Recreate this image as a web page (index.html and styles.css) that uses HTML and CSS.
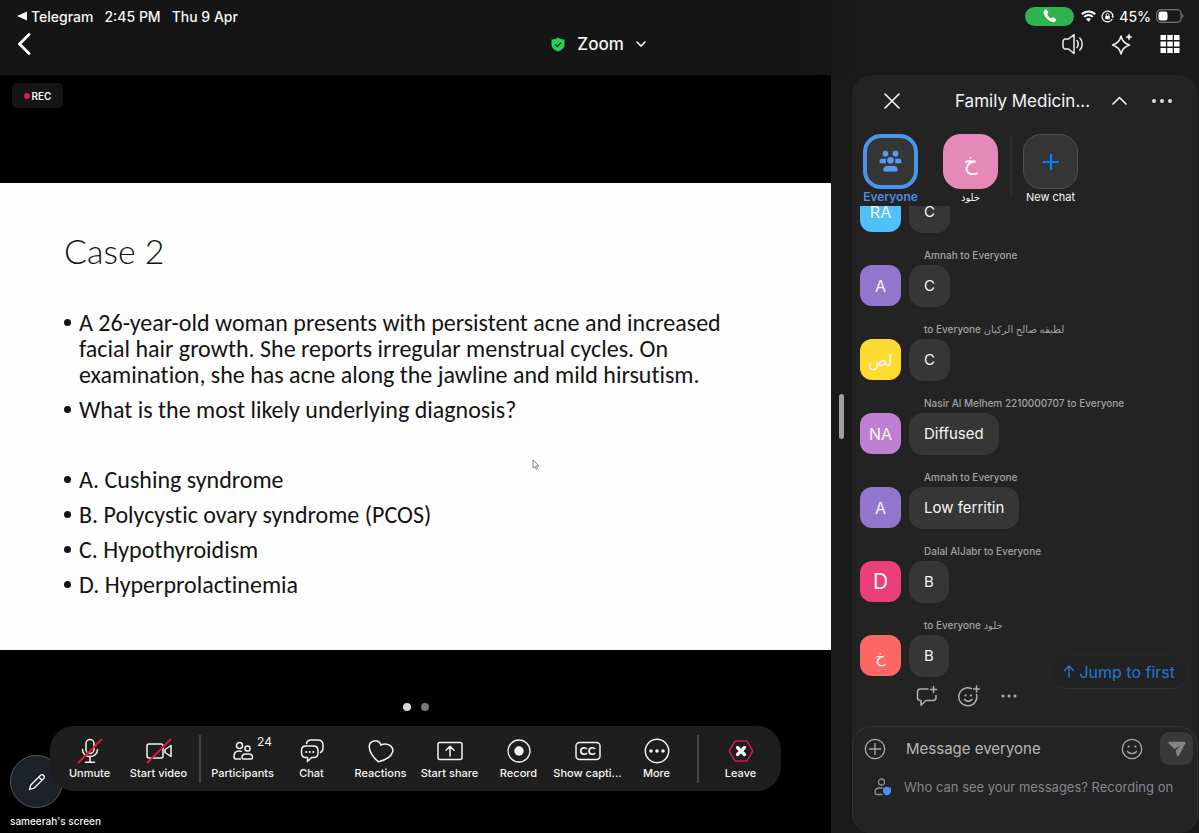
FILE: index.html
```html
<!DOCTYPE html>
<html lang="en">
<head>
    <meta charset="UTF-8">
    <meta name="viewport" content="width=device-width, initial-scale=1.0">
    <title>Zoom</title>
    <link rel="stylesheet" href="styles.css">
</head>
<body>
    <header class="topbar">
        <div class="status">
            <a href="#" class="status-back">
                <svg width="10" height="10" viewBox="0 0 10 10"><path d="M10 .5v9L0 5z" fill="currentColor"/></svg>
                Telegram
            </a>
            <span>2:45 PM</span>
            <span>Thu 9 Apr</span>
            <div class="status-right">
                <span class="call-pill">
                    <svg width="14" height="14" viewBox="0 0 14 14"><path d="M1.2 1.6C2.4.2 3.3.2 4.200 1.500l.9 1.400c.4.7.3 1.200-.3 1.700-.6.5-.6.9-.1 1.700.7 1.100 1.500 1.900 2.600 2.700.7.5 1.100.5 1.700-.2.5-.6 1-.7 1.700-.2l1.700 1.200c1 .8 1 1.500-.1 2.600-1.100 1.100-3 1-5.300-.4C4.300 10.400 2.600 8.600 1.300 6 .3 4 .3 2.700 1.200 1.600z" fill="#fff"/></svg>
                </span>
                <svg width="15" height="12" viewBox="0 0 15 12" fill="none" stroke="#fff" stroke-width="2"><path d="M.8 4.300c3.800-3.900 9.600-3.900 13.400 0M3.200 6.900c2.500-2.400 6.100-2.400 8.600 0"/><path d="M5 9c1.500-1.400 3.500-1.400 5 0l-2.500 2.700z" fill="#fff" stroke="none"/></svg>
                <svg width="13" height="13" viewBox="0 0 13 13" fill="none" stroke="#fff" stroke-width="1.200"><path d="M11.300 9A5.400 5.400 0 1 1 11.900 6.500"/><path d="M10.300 6.200h2.700l-1.200 2z" fill="#fff" stroke="none"/><rect x="4.200" y="5.900" width="4.600" height="3.400" rx=".6" fill="#fff" stroke="none"/><path d="M5.200 6V4.800a1.300 1.300 0 0 1 2.600 0V6" stroke-width="1"/></svg>
                <span>45%</span>
                <svg width="28" height="14" viewBox="0 0 28 14"><rect x=".7" y=".7" width="24.500" height="12.600" rx="4" fill="none" stroke="#777" stroke-width="1.200"/><rect x="2.500" y="2.500" width="9" height="9" rx="2.200" fill="#fff"/><path d="M26.400 5v4c1.500-.6 1.500-3.400 0-4z" fill="#777"/></svg>
            </div>
        </div>
        <div class="nav">
            <button class="icon-btn" aria-label="Back">
                <svg width="14" height="22" viewBox="0 0 14 22" fill="none" stroke="#fff" stroke-width="2.800" stroke-linecap="round" stroke-linejoin="round"><path d="M12 1.500 2.500 11l9.500 9.500"/></svg>
            </button>
            <button class="meeting-title">
                <svg width="14" height="15" viewBox="0 0 14 15"><path d="M7 .5c1.800 1.300 3.800 1.900 6.500 2v5c0 3.300-2.500 5.700-6.500 7-4-1.300-6.500-3.700-6.500-7v-5C3.200 2.400 5.200 1.800 7 .5z" fill="#23d05c"/><path d="m4 7.300 2.200 2.200 3.900-4" fill="none" stroke="#12331c" stroke-width="1.500"/></svg>
                <span>Zoom</span>
                <svg width="10" height="6" viewBox="0 0 10 6" fill="none" stroke="#fff" stroke-width="1.500" stroke-linecap="round"><path d="m1 1 4 4 4-4"/></svg>
            </button>
            <div class="nav-right">
                <button class="icon-btn" aria-label="Speaker">
                    <svg width="22" height="22" viewBox="0 0 22 22" fill="none" stroke="#eee" stroke-width="1.500" stroke-linecap="round" stroke-linejoin="round"><path d="M3.500 6h3L12 1.500v19L6.500 16h-3A2.500 2.500 0 0 1 1 13.500v-5A2.500 2.500 0 0 1 3.500 6z"/><path d="M15 7.500c1.600 1.800 1.600 5.200 0 7M17.800 5c3.200 3 3.200 9 0 12"/></svg>
                </button>
                <button class="icon-btn" aria-label="AI Companion">
                    <svg width="22" height="22" viewBox="0 0 22 22" fill="none" stroke="#eee" stroke-width="1.500" stroke-linejoin="round"><path d="M10 3c1.300 5 3.200 7 8.500 9-5.300 2-7.200 4-8.500 9-1.300-5-3.200-7-8.500-9C6.800 10 8.700 8 10 3z"/><path d="M18 .8c.5 2 1.200 2.700 3.200 3.200-2 .5-2.700 1.200-3.200 3.200-.5-2-1.200-2.700-3.200-3.200 2-.5 2.700-1.200 3.200-3.200z" fill="#eee" stroke-width=".5"/></svg>
                </button>
                <button class="icon-btn" aria-label="Gallery view">
                    <svg width="20" height="20" viewBox="0 0 20 20" fill="#fff"><path d="M.5 1h5.500v5H.5zM7.250 1h5.500v5h-5.500zM14 1h5.500v5H14zM.5 7.500h5.500v5H.5zM7.250 7.500h5.500v5h-5.500zM14 7.500h5.500v5H14zM.5 14h5.500v5H.5zM7.250 14h5.500v5h-5.500zM14 14h5.500v5H14z"/></svg>
                </button>
            </div>
        </div>
    </header>

    <div class="content">
        <main class="stage">
            <div class="stage-top">
                <span class="rec"><i></i>REC</span>
            </div>

            <section class="slide">
                <h1>Case 2</h1>
                <ul>
                    <li>A 26-year-old woman presents with persistent acne and increased<br>facial hair growth. She reports irregular menstrual cycles. On<br>examination, she has acne along the jawline and mild hirsutism.</li>
                    <li>What is the most likely underlying diagnosis?</li>
                    <li class="blank"></li>
                    <li>A. Cushing syndrome</li>
                    <li>B. Polycystic ovary syndrome (PCOS)</li>
                    <li>C. Hypothyroidism</li>
                    <li>D. Hyperprolactinemia</li>
                </ul>
                <svg class="cursor" width="8" height="11" viewBox="0 0 8 11"><path d="M1 1v8l2-1.700 1.300 2.900 1.300-.6L4.400 6.800H7z" fill="#fff" stroke="#777" stroke-width=".9"/></svg>
            </section>

            <div class="pages"><i class="current"></i><i></i></div>

            <div class="stage-bottom">
                <button class="annotate" aria-label="Annotate">
                    <svg width="18" height="18" viewBox="0 0 18 18" fill="none" stroke="#fff" stroke-width="1.300" stroke-linejoin="round"><path d="M1.500 16.500 2.800 12 12.600 2.200a1.900 1.900 0 0 1 2.700 0l.5.5a1.900 1.900 0 0 1 0 2.700L6 15.200zM10.800 4l3.200 3.200"/></svg>
                </button>
                <nav class="toolbar">
                    <button class="tool">
                        <svg width="26" height="26" viewBox="0 0 26 26" fill="none" stroke="#f2f2f2" stroke-width="1.500" stroke-linecap="round"><rect x="9" y="1.500" width="8" height="14" rx="4"/><path d="M5.500 11.500c0 9.300 15 9.300 15 0M13 19v5M8.500 24.200h9"/><path d="M1.500 24.500 24.500 1.500" stroke="#e3173e" stroke-width="1.800"/></svg>
                        Unmute
                    </button>
                    <button class="tool">
                        <svg width="26" height="26" viewBox="0 0 26 26" fill="none" stroke="#f2f2f2" stroke-width="1.500" stroke-linejoin="round"><rect x="1" y="6" width="16" height="14" rx="2"/><path d="M19 11.500 25 7.500v11L19 14.500z"/><path d="M1.500 24.500 24.500 1.500" stroke="#e3173e" stroke-width="1.800" stroke-linecap="round"/></svg>
                        Start video
                    </button>
                    <span class="tool-divider"></span>
                    <button class="tool">
                        <svg width="26" height="26" viewBox="0 0 26 26" fill="none" stroke="#f2f2f2" stroke-width="1.500"><circle cx="9.500" cy="7.500" r="3"/><circle cx="17.500" cy="10.500" r="2.600"/><path d="M11 21H6c-1.500 0-2-.8-2-2.500 0-3.500 1.500-5.500 5-5.500 1.200 0 2 .2 2.800.7"/><path d="M13.500 21h7.500c1.200 0 1.500-.8 1.500-1.600 0-2-1.500-3.400-3.500-3.400h-3.500c-2 0-3.500 1.400-3.500 3.400 0 .8.400 1.600 1.500 1.600z"/></svg>
                        <span class="count">24</span>
                        Participants
                    </button>
                    <button class="tool">
                        <svg width="26" height="26" viewBox="0 0 26 26" fill="none" stroke="#f2f2f2" stroke-width="1.500" stroke-linejoin="round" stroke-linecap="round"><path d="M7.500 5.500c.5-2.500 2-3.500 4.500-3.500h6.500c3.500 0 5.500 2 5.500 5v3c0 2.200-.8 3.600-2.500 4.500"/><path d="M7 8h7.500c3 0 4.500 1.700 4.500 4.500v2.500c0 3-1.500 4.500-4.500 4.500h-2L8.500 23.500v-4H7c-3 0-4.500-1.500-4.500-4.500v-2.500C2.500 9.700 4 8 7 8z"/><path d="M7.200 14h.1M10.700 14h.1M14.200 14h.1" stroke-width="2"/></svg>
                        Chat
                    </button>
                    <button class="tool">
                        <svg width="26" height="26" viewBox="0 0 26 26" fill="none" stroke="#f2f2f2" stroke-width="1.500" stroke-linejoin="round"><path d="M10.500 23.800C5.500 20 1 13.500 1.200 8.500 1.500 2.500 10.500.3 12.800 7c7-3 13.300 1.800 11.800 7-1.500 4.800-8 8.300-14.100 9.800z"/></svg>
                        Reactions
                    </button>
                    <button class="tool">
                        <svg width="26" height="26" viewBox="0 0 26 26" fill="none" stroke="#f2f2f2" stroke-width="1.500" stroke-linecap="round" stroke-linejoin="round"><rect x="1" y="4.500" width="24" height="17" rx="2"/><path d="M13 18V8.500M9 12.200l4-4 4 4"/></svg>
                        Start share
                    </button>
                    <button class="tool">
                        <svg width="26" height="26" viewBox="0 0 26 26" fill="none" stroke="#f2f2f2" stroke-width="1.300"><circle cx="13" cy="13" r="11"/><circle cx="13" cy="13" r="4.700" fill="#f2f2f2" stroke="none"/></svg>
                        Record
                    </button>
                    <button class="tool">
                        <svg width="26" height="26" viewBox="0 0 26 26" fill="none" stroke="#f2f2f2" stroke-width="1.500"><rect x="1" y="4.500" width="24" height="17" rx="3.500"/><path d="M11.800 11c-1.200-2-6-1.700-6 2s4.800 4 6 2M20 11c-1.200-2-6-1.700-6 2s4.800 4 6 2" stroke-width="1.700"/></svg>
                        Show capti...
                    </button>
                    <button class="tool">
                        <svg width="26" height="26" viewBox="0 0 26 26" fill="#f2f2f2"><circle cx="13" cy="13" r="11.700" fill="none" stroke="#f2f2f2" stroke-width="1.500"/><circle cx="7" cy="13" r="1.800"/><circle cx="13" cy="13" r="1.800"/><circle cx="19" cy="13" r="1.800"/></svg>
                        More
                    </button>
                    <span class="tool-divider"></span>
                    <button class="tool">
                        <svg width="26" height="26" viewBox="0 0 26 26" fill="none"><path d="M8 3h10c.6 0 1 .2 1.300.7l5 8.500c.3.500.3 1.100 0 1.600l-5 8.500c-.3.500-.7.700-1.300.7H8c-.6 0-1-.2-1.300-.7l-5-8.500a1.600 1.600 0 0 1 0-1.600l5-8.500C7 3.200 7.400 3 8 3z" stroke="#d8174f" stroke-width="1.500"/><path d="m9.500 9.500 7 7M16.500 9.500l-7 7" stroke="#fff" stroke-width="3.200" stroke-linecap="round"/></svg>
                        Leave
                    </button>
                </nav>
                <span class="screen-name">sameerah's screen</span>
            </div>
        </main>

        <div class="resizer"><i></i></div>

        <aside class="chat">
            <div class="chat-head">
                <button class="icon-btn" aria-label="Close">
                    <svg width="16" height="16" viewBox="0 0 16 16" stroke="#fff" stroke-width="1.500" stroke-linecap="round"><path d="m1 1 14 14M15 1 1 15"/></svg>
                </button>
                <h2>Family Medicin...</h2>
                <button class="icon-btn" aria-label="Collapse">
                    <svg width="15" height="9" viewBox="0 0 15 9" fill="none" stroke="#fff" stroke-width="1.500" stroke-linecap="round"><path d="m1 8 6.500-6.500L14 8"/></svg>
                </button>
                <button class="icon-btn" aria-label="More options">
                    <svg width="22" height="6" viewBox="0 0 22 6" fill="#ddd"><circle cx="3" cy="3" r="2"/><circle cx="11" cy="3" r="2"/><circle cx="19" cy="3" r="2"/></svg>
                </button>
            </div>

            <div class="tabs">
                <button class="tab active">
                    <span class="tab-icon">
                        <svg width="23" height="23" viewBox="0 0 23 23" fill="#559cf2" stroke="#353535" stroke-width=".8"><circle cx="6.500" cy="3.700" r="3.400"/><circle cx="16.500" cy="3.700" r="3.400"/><path d="M2.800 8.300h4.500v5.500H2.200C.8 13.800.2 12.800.2 11.500c0-1.700.8-3.200 2.600-3.200zM20.200 8.300h-4.500v5.500h5.100c1.400 0 2-1 2-2.300 0-1.700-.8-3.200-2.600-3.200z"/><circle cx="11.500" cy="10.300" r="4" stroke-width="1.300"/><path d="M8.500 15.500h6c2.800 0 4.500 1.800 4.500 4 0 1.600-.7 2.500-2.200 2.500H6.200C4.700 22 4 21.100 4 19.500c0-2.200 1.700-4 4.500-4z"/></svg>
                    </span>
                    Everyone
                </button>
                <button class="tab">
                    <span class="tab-icon pink">خ</span>
                    <span class="tab-name">خلود</span>
                </button>
                <span class="tab-divider"></span>
                <button class="tab">
                    <span class="tab-icon outlined">
                        <svg width="18" height="18" viewBox="0 0 18 18" stroke="#0e7cf5" stroke-width="2.200"><path d="M9 1v16M1 9h16"/></svg>
                    </span>
                    New chat
                </button>
            </div>

            <div class="messages">
                <div class="message">
                    <span class="avatar sky">RA</span>
                    <p>C</p>
                </div>
                <div class="message">
                    <span class="sender">Amnah to Everyone</span>
                    <span class="avatar violet">A</span>
                    <p>C</p>
                </div>
                <div class="message">
                    <span class="sender" dir="rtl">لطيفه صالح الركيان to Everyone</span>
                    <span class="avatar yellow">لص</span>
                    <p>C</p>
                </div>
                <div class="message">
                    <span class="sender">Nasir Al Melhem 2210000707 to Everyone</span>
                    <span class="avatar orchid">NA</span>
                    <p>Diffused</p>
                </div>
                <div class="message">
                    <span class="sender">Amnah to Everyone</span>
                    <span class="avatar violet">A</span>
                    <p>Low ferritin</p>
                </div>
                <div class="message">
                    <span class="sender">Dalal AlJabr to Everyone</span>
                    <span class="avatar rose">D</span>
                    <p>B</p>
                </div>
                <div class="message last">
                    <span class="sender" dir="rtl">خلود to Everyone</span>
                    <span class="avatar coral">خ</span>
                    <p>B</p>
                </div>
                <div class="message-actions">
                    <button class="icon-btn" aria-label="Reply">
                        <svg width="22" height="22" viewBox="0 0 22 22" fill="none" stroke="#b0b0b0" stroke-width="1.500" stroke-linecap="round" stroke-linejoin="round"><path d="M12 4H4.500C2.500 4 1.500 5 1.500 7v5.500c0 2 1 3 3 3H5v4.700l5-4.700h7c2 0 3-1 3-3V10.500M17.500 1.500v6M14.500 4.500h6"/></svg>
                    </button>
                    <button class="icon-btn" aria-label="Add reaction">
                        <svg width="22" height="22" viewBox="0 0 22 22" fill="none" stroke="#b0b0b0" stroke-width="1.500" stroke-linecap="round"><path d="M13.500 3.600A9 9 0 1 0 18.500 9.500M18.500 1v6M15.500 4h6M6.500 14.500c2 2.300 5.500 2.300 7.500 0"/><path d="M7.500 10.500h.1M12.900 10.500h.1" stroke-width="2.200"/></svg>
                    </button>
                    <button class="icon-btn" aria-label="More actions">
                        <svg width="18" height="4" viewBox="0 0 18 4" fill="#b0b0b0"><circle cx="3" cy="2" r="1.500"/><circle cx="9" cy="2" r="1.500"/><circle cx="15" cy="2" r="1.500"/></svg>
                    </button>
                </div>
                <button class="jump">
                    <svg width="12" height="13" viewBox="0 0 12 13" fill="none" stroke="currentColor" stroke-width="1.400" stroke-linecap="round" stroke-linejoin="round"><path d="M6 12V1M1.500 5.500 6 1l4.500 4.500"/></svg>
                    Jump to first
                </button>
            </div>

            <form class="composer">
                <div class="composer-row">
                    <button type="button" class="icon-btn" aria-label="Attach">
                        <svg width="22" height="22" viewBox="0 0 22 22" fill="none" stroke="#aaa" stroke-width="1.300"><circle cx="11" cy="11" r="9.700"/><path d="M11 5v12M5 11h12"/></svg>
                    </button>
                    <input type="text" placeholder="Message everyone" aria-label="Message everyone">
                    <button type="button" class="icon-btn" aria-label="Emoji">
                        <svg width="22" height="22" viewBox="0 0 22 22" fill="none" stroke="#aaa" stroke-width="1.300" stroke-linecap="round"><circle cx="11" cy="11" r="9.700"/><path d="M6.500 13.500c2 2.800 7 2.800 9 0"/><path d="M7.500 8.500h.1M14.400 8.500h.1" stroke-width="2.200"/></svg>
                    </button>
                    <button type="submit" class="send" aria-label="Send">
                        <svg width="18" height="16" viewBox="0 0 18 16" fill="#858585"><path d="M1.500.8h14.700c1 0 1.500.8 1 1.600l-6.400 12.300c-.5 1-1.600.9-1.900-.2L7.700 9.700l4.800-5.200-6 3.600L1 2.700C0 1.800.4.800 1.500.8z"/></svg>
                    </button>
                </div>
                <a href="#" class="privacy">
                    <svg width="18" height="18" viewBox="0 0 18 18" fill="none" stroke="#8d8d94" stroke-width="1.300"><circle cx="7.500" cy="4" r="3"/><path d="M8.500 16.500H3c-1.300 0-2-.7-2-2C1 11.500 3 10 5.500 10h3"/><path d="M13 8.500c1.200.8 2.200 1.100 4 1.200v3.300c0 2-1.300 3.500-4 4.600-2.700-1.100-4-2.600-4-4.600V9.700c1.800-.1 2.800-.4 4-1.200z" fill="#4a8cf7" stroke="none"/></svg>
                    Who can see your messages? Recording on
                </a>
            </form>
        </aside>
    </div>
</body>
</html>
```
FILE: styles.css
```css
* {
    box-sizing: border-box;
}

body {
    margin: 0;
    min-height: 100vh;
    display: flex;
    flex-direction: column;
    background-color: #1a1a1a;
    color: #f5f5f5;
    font-family: Inter, "DejaVu Sans", sans-serif;
}

button {
    padding: 0;
    border: none;
    background: none;
    color: inherit;
    font: inherit;
    cursor: pointer;
}

svg {
    display: block;
    flex-shrink: 0;
}

a {
    color: inherit;
    text-decoration: none;
}

.icon-btn {
    display: flex;
    align-items: center;
    justify-content: center;
}

/* top bar */
.topbar {
    height: 75px;
    padding: 6px 15px 0 17px;
    background: linear-gradient(to right, #151515 65%, #1a1a1a 72%);
}

.status {
    display: flex;
    align-items: center;
    gap: 11px;
    height: 20px;
    font-size: 14px;
    font-weight: 500;
}

.status-back {
    display: flex;
    align-items: center;
    gap: 4px;
}

.status-right {
    display: flex;
    align-items: center;
    gap: 5px;
    margin-left: auto;
}

.call-pill {
    display: flex;
    align-items: center;
    justify-content: center;
    width: 49px;
    height: 19px;
    margin-right: 2px;
    border-radius: 10px;
    background-color: #2fb350;
}

.nav {
    display: grid;
    grid-template-columns: 1fr auto 1fr;
    align-items: center;
    height: 36px;
    padding-right: 4px;
}

.nav > .icon-btn {
    justify-self: start;
}

.meeting-title {
    display: flex;
    align-items: center;
    gap: 12px;
    font-size: 17px;
    font-weight: 500;
}

.nav-right {
    display: flex;
    align-items: center;
    gap: 27px;
    justify-self: end;
}

.content {
    display: flex;
    flex: 1;
}

/* shared screen */
.stage {
    display: flex;
    flex: 1;
    flex-direction: column;
    min-width: 0;
    background-color: #000;
}

.stage-top {
    display: flex;
    align-items: flex-start;
    height: 108px;
    padding: 8px 12px;
}

.rec {
    display: flex;
    align-items: center;
    justify-content: center;
    gap: 2px;
    width: 51px;
    height: 25px;
    border-radius: 5px;
    background-color: #151515;
    font-size: 10px;
    font-weight: 600;
}

.rec i {
    width: 6px;
    height: 6px;
    border-radius: 50%;
    background-color: #d3203c;
}

.slide {
    position: relative;
    aspect-ratio: 16 / 9;
    padding: 45px 64px 0;
    background-color: #fdfdfd;
    color: #141414;
    font-family: Calibri, Carlito, Lato, sans-serif;
    font-variant-ligatures: none;
}

.slide h1 {
    margin: 0 0 36px;
    font-family: Lato, sans-serif;
    font-size: 34px;
    font-weight: 300;
    line-height: 46px;
}

.slide ul {
    margin: 0;
    padding: 0;
    list-style: none;
    font-size: 24px;
    line-height: 26px;
}

.slide li {
    display: flex;
    min-height: 26px;
    margin-bottom: 9px;
    white-space: nowrap;
}

.slide li::before {
    content: "";
    flex-shrink: 0;
    width: 7px;
    height: 7px;
    margin: 9px 8px 0 0;
    border-radius: 50%;
    background-color: #141414;
}

.slide li.blank::before {
    display: none;
}

.cursor {
    position: absolute;
    left: 64%;
    top: 59%;
}

.pages {
    display: flex;
    justify-content: center;
    gap: 10px;
    margin: 53px 0 15px;
}

.pages i {
    width: 8px;
    height: 8px;
    border-radius: 50%;
    background-color: #777;
}

.pages .current {
    background-color: #d8d8d8;
}

.stage-bottom {
    position: relative;
    display: flex;
    flex: 1;
    flex-direction: column;
    align-items: center;
}

.toolbar {
    position: relative;
    display: flex;
    align-items: center;
    height: 65px;
    padding: 0 6px 0 5px;
    border-radius: 24px;
    background-color: #1e1e1e;
}

.tool {
    position: relative;
    display: flex;
    flex-direction: column;
    align-items: center;
    gap: 2px;
    width: 69px;
    font-size: 11px;
    font-weight: 500;
    line-height: 14px;
    white-space: nowrap;
}

.count {
    position: absolute;
    top: -3px;
    right: 5px;
    font-size: 12px;
    font-weight: 400;
}

.tool-divider {
    width: 2px;
    height: 48px;
    margin: 0 7px 0 6px;
    background-color: #444449;
}

.annotate {
    position: absolute;
    left: 10px;
    top: 29px;
    display: flex;
    align-items: center;
    justify-content: center;
    width: 53px;
    height: 53px;
    border: 1px solid #55585c;
    border-radius: 50%;
    background-color: #1d2128;
}

.screen-name {
    align-self: flex-start;
    margin: 23px 0 0 10px;
    font-size: 10px;
    font-weight: 500;
    line-height: 14px;
}

.resizer {
    display: flex;
    align-items: center;
    justify-content: center;
    width: 21px;
    padding-bottom: 76px;
}

.resizer i {
    width: 5px;
    height: 45px;
    border-radius: 3px;
    background-color: #a0a0a0;
}

/* chat panel */
.chat {
    display: flex;
    flex-direction: column;
    width: 346px;
    margin-right: 1px;
    border-radius: 20px;
    background-color: #232323;
}

.chat-head {
    display: flex;
    align-items: center;
    height: 51px;
    padding: 0 25px 0 32px;
}

.chat-head h2 {
    flex: 1;
    margin: 0;
    padding-left: 55px;
    font-size: 17px;
    font-weight: 400;
}

.chat-head .icon-btn:last-child {
    margin-left: 24px;
}

.tabs {
    display: flex;
    height: 80px;
    padding: 8px 11px 0;
}

.tab {
    display: flex;
    flex-direction: column;
    align-items: center;
    gap: 1px;
    width: 55px;
    font-size: 11px;
    line-height: 14px;
    white-space: nowrap;
}

.tab + .tab {
    margin-left: 25px;
}

.tab-icon {
    display: flex;
    align-items: center;
    justify-content: center;
    width: 55px;
    height: 55px;
    border-radius: 18px;
    background-color: #353535;
    font-size: 22px;
}

.tab-name {
    font-size: 10px;
}

.tab.active {
    color: #4a90e2;
    font-size: 12px;
    font-weight: 600;
}

.tab.active .tab-icon {
    border: 4px solid #4a94ee;
}

.tab-icon.pink {
    background-color: #e589b8;
}

.tab-icon.outlined {
    border: 1px solid #505050;
}

.tab-divider {
    width: 2px;
    height: 62px;
    margin: 0 11px 0 12px;
    background-color: #2b2b2b;
}

.messages {
    position: relative;
    display: flex;
    flex-direction: column;
    justify-content: flex-end;
    height: 520px;
    padding: 0 8px 11px;
    overflow: hidden;
}

.message {
    display: grid;
    grid-template-columns: 41px 1fr;
    column-gap: 8px;
    row-gap: 2px;
    flex-shrink: 0;
    margin-bottom: 14px;
}

.message.last {
    margin-bottom: 0;
}

.sender {
    grid-column: 2;
    justify-self: start;
    margin-left: 15px;
    color: #a2a2a2;
    font-size: 10px;
    font-weight: 500;
    line-height: 16px;
}

.avatar {
    display: flex;
    align-items: center;
    justify-content: center;
    width: 41px;
    height: 41px;
    border-radius: 12px;
    font-size: 16px;
}

.sky { background-color: #4fc0f8; }
.violet { background-color: #9475cd; }
.yellow { background-color: #fddb30; }
.orchid { background-color: #bf80d3; }
.rose { background-color: #ec3f7a; font-size: 21px; }
.coral { background-color: #fd6764; }

.message p {
    justify-self: start;
    margin: 0;
    padding: 0 15px;
    border-radius: 14px;
    background-color: #363636;
    font-size: 15px;
    line-height: 42px;
}

.message-actions {
    display: flex;
    flex-shrink: 0;
    align-items: center;
    gap: 20px;
    height: 38px;
    padding-left: 56px;
}

.jump {
    position: absolute;
    right: 9px;
    bottom: 37px;
    display: flex;
    align-items: center;
    gap: 4px;
    height: 35px;
    padding: 0 13px;
    border: 1px solid #29292c;
    border-bottom-color: #302c3c;
    border-radius: 18px;
    background-color: #222;
    color: #2377d4;
    font-size: 16px;
}

.composer {
    flex: 1;
    padding: 5px 4px 0 11px;
    border: 1px solid #323232;
    border-bottom: none;
    border-radius: 20px;
}

.composer-row {
    display: flex;
    align-items: center;
    height: 33px;
}

.composer input {
    flex: 1;
    min-width: 0;
    padding: 0;
    margin: 0 20px;
    border: none;
    outline: none;
    background: none;
    color: #fff;
    font-family: inherit;
    font-size: 15px;
}

.composer input::placeholder {
    color: #b8b8b8;
}

.send {
    display: flex;
    align-items: center;
    justify-content: center;
    width: 33px;
    height: 33px;
    margin-left: 17px;
    border-radius: 9px;
    background-color: #393939;
}

.privacy {
    display: flex;
    align-items: center;
    gap: 12px;
    height: 44px;
    padding-left: 10px;
    color: #85858d;
    font-size: 13px;
    white-space: nowrap;
}
```
